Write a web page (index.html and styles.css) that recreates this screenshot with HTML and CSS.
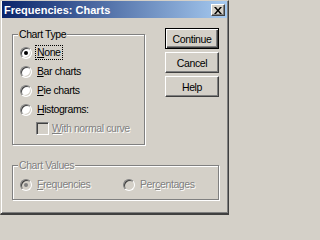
FILE: index.html
```html
<!DOCTYPE html>
<html>
<head>
<meta charset="utf-8">
<title>Frequencies: Charts</title>
<link rel="stylesheet" href="styles.css">
</head>
<body>
<div class="window">
  <div class="titlebar">
    <span class="title">Frequencies: Charts</span>
    <span class="close"><svg width="8" height="7" viewBox="0 0 8 7"><path d="M0 0h2l2 2.5 2-2.5h2l-3 3.5 3 3.5h-2l-2-2.5-2 2.5h-2l3-3.5z" fill="#000"/></svg></span>
  </div>
  <div class="body">
    <div class="top">
      <div class="group type">
        <span class="group-label">Chart Type</span>
        <div class="opt"><span class="radio checked"></span><span class="text focus"><u>N</u>one</span></div>
        <div class="opt"><span class="radio"></span><span class="text"><u>B</u>ar charts</span></div>
        <div class="opt"><span class="radio"></span><span class="text"><u>P</u>ie charts</span></div>
        <div class="opt"><span class="radio"></span><span class="text"><u>H</u>istograms:</span></div>
        <div class="opt sub disabled"><span class="check"></span><span class="text"><u>W</u>ith normal curve</span></div>
      </div>
      <div class="buttons">
        <div class="btn default">Continue</div>
        <div class="btn">Cancel</div>
        <div class="btn">Help</div>
      </div>
    </div>
    <div class="group values disabled">
      <span class="group-label">Chart Values</span>
      <div class="vrow">
        <div class="opt"><span class="radio checked"></span><span class="text"><u>F</u>requencies</span></div>
        <div class="opt"><span class="radio"></span><span class="text">Per<u>c</u>entages</span></div>
      </div>
    </div>
  </div>
</div>
</body>
</html>
```
FILE: styles.css
```css
* { box-sizing: border-box; }
html, body { margin: 0; }
body {
  background: #d4d0c8;
  font-family: "Liberation Sans", Arial, sans-serif;
  font-size: 10.5px;
  letter-spacing: -0.4px;
  color: #000;
}
.window {
  width: 229px;
  height: 215px;
  border-style: solid;
  border-width: 1px 1px 2px 1px;
  border-color: #d4d0c8 #404040 #404040 #d4d0c8;
  padding: 0 1px;
  box-shadow: inset 1px 0 #fff, inset -1px -1px #808080;
  background: #d4d0c8;
}
.titlebar {
  height: 17px;
  display: flex;
  align-items: center;
  justify-content: space-between;
  padding: 0 2px;
  background: linear-gradient(to right, #0a246a, #a6caf0);
  color: #fff;
  font-weight: bold;
  font-size: 11px;
  letter-spacing: 0;
}
.close {
  width: 14px;
  height: 12px;
  display: flex;
  align-items: center;
  justify-content: center;
  background: #d4d0c8;
  border: 1px solid;
  border-color: #fff #404040 #404040 #fff;
  box-shadow: inset -1px -1px #808080;
  margin-top: 1px;
}
.close svg { display: block; }
.body { padding: 10px 0 0 10px; }
.top { display: flex; align-items: flex-start; gap: 20px; }
.group {
  position: relative;
  border: 1px solid #808080;
  box-shadow: inset 1px 1px #fff, 1px 1px #fff;
}
.group-label {
  position: absolute;
  top: -7px;
  left: 5px;
  padding: 0 1px;
  line-height: 12px;
  background: #d4d0c8;
}
.type {
  width: 133px;
  margin-top: 6px;
  padding: 8px 6px 6px 7px;
}
.values {
  width: 207px;
  margin-top: 20px;
  padding: 9px 6px 5px 7px;
}
.vrow { display: grid; grid-template-columns: 103px auto; }
.opt {
  height: 19px;
  display: flex;
  align-items: center;
}
.opt.sub { padding-left: 16px; }
.radio {
  position: relative;
  width: 12px;
  height: 12px;
  border-radius: 50%;
  background: #fff;
  border: 1px solid;
  border-color: #808080 #fff #fff #808080;
  box-shadow: inset 1px 1px #404040, inset -1px -1px #d4d0c8;
  margin-right: 3px;
  flex: none;
}
.radio.checked::after {
  content: "";
  position: absolute;
  left: 3px;
  top: 3px;
  width: 4px;
  height: 4px;
  border-radius: 50%;
  background: #000;
}
.check {
  width: 13px;
  height: 13px;
  background: #fff;
  border: 1px solid;
  border-color: #808080 #fff #fff #808080;
  box-shadow: inset 1px 1px #404040, inset -1px -1px #d4d0c8;
  margin-right: 1px;
  flex: none;
}
.text {
  border: 1px solid transparent;
  padding: 0 1px;
  line-height: 13px;
  white-space: nowrap;
}
.text.focus { border: 1px dotted #000; }
u { text-decoration: underline; text-underline-offset: 1px; }
.disabled .text, .disabled .group-label, .disabled.group > .group-label {
  color: #808080;
  text-shadow: 1px 1px 0 #fff;
}
.disabled .radio, .disabled .check { background: #d4d0c8; }
.disabled .radio.checked::after { background: #808080; }
.buttons { display: flex; flex-direction: column; gap: 3px; }
.btn {
  width: 54px;
  height: 21px;
  display: flex;
  align-items: center;
  justify-content: center;
  background: #d4d0c8;
  border: 1px solid;
  border-color: #fff #404040 #404040 #fff;
  box-shadow: inset -1px -1px #808080;
}
.btn.default {
  border: 1px solid #000;
  box-shadow: inset 1px 1px #fff, inset -1px -1px #404040, inset -2px -2px #808080;
}
```
